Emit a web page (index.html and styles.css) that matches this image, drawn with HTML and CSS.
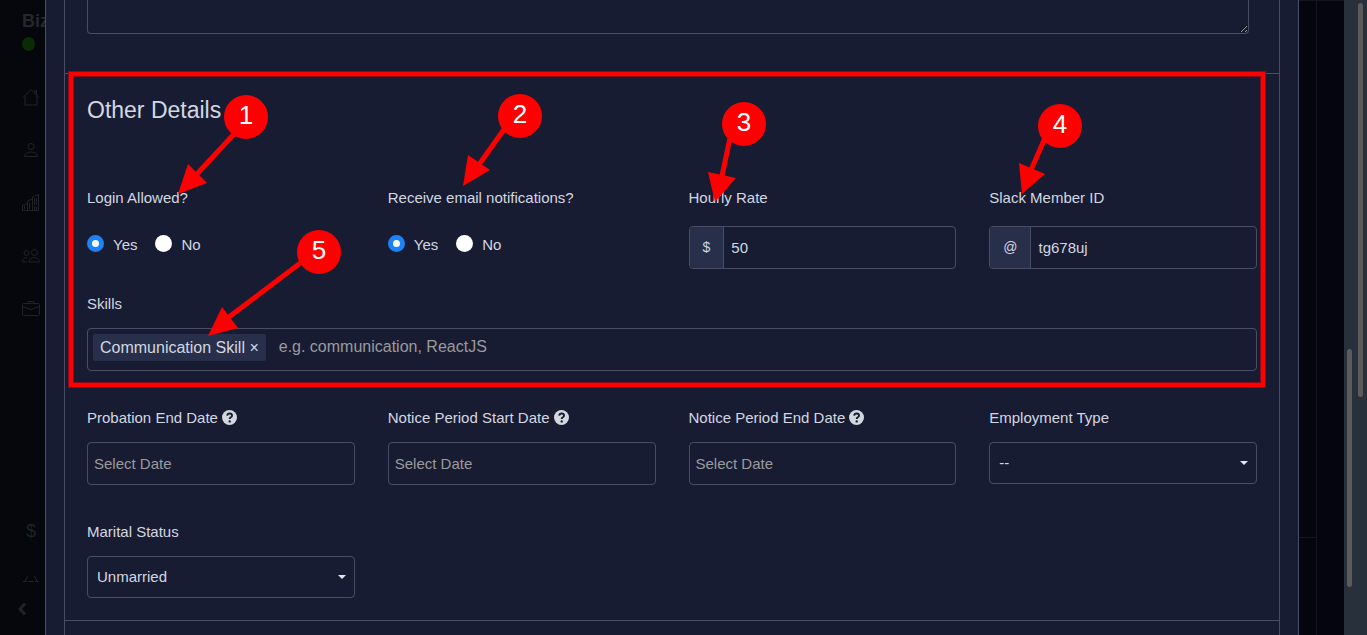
FILE: index.html
```html
<!DOCTYPE html>
<html lang="en">
<head>
<meta charset="UTF-8">
<meta name="viewport" content="width=device-width, initial-scale=1">
<title>Employee - Other Details</title>
<link rel="stylesheet" href="styles.css">
</head>
<body>

<div class="page">
  <aside class="sidebar">
    <div class="brand">Biz</div>
    <div class="status"></div>
    <nav class="menu">
      <a href="#" aria-label="Dashboard"><svg viewBox="0 0 18 18"><path d="M1 9.500 9 1.500l8 8M3 8v9h12V8M13 5V2.500h1.500V7"/></svg></a>
      <a href="#" aria-label="Leads"><svg viewBox="0 0 18 18"><circle cx="9" cy="5.500" r="3"/><path d="M2.500 15.500c0-6 13-6 13 0z"/></svg></a>
      <a href="#" aria-label="HR"><svg viewBox="0 0 18 18"><path d="M.5 16.500v-5l5-2V7l5-2V3l6-2.500v16zM5.500 9.500v7M10.500 5v11.500M12.500 16v-3h2v3M2.500 12v3M7.500 9v6M12.500 4v7M14.500 4v7"/></svg></a>
      <a href="#" aria-label="Clients"><svg viewBox="0 0 18 18"><circle cx="4.500" cy="6" r="2.500"/><circle cx="12.500" cy="5.500" r="3"/><path d="M5 10.500c-3 0-4.500 2-4.500 4.500H5M7 15c0-6 10.500-6 10.500 0z"/></svg></a>
      <a href="#" aria-label="Work"><svg viewBox="0 0 18 18"><rect x=".5" y="3.500" width="17" height="12" rx="1"/><path d="M6 3.500v-2h6v2M.5 6.500l8.500 3 8.500-3"/></svg></a>
    </nav>
    <nav class="menu-bottom">
      <a href="#" class="dollar">$</a>
      <a href="#" aria-label="Assets"><svg viewBox="0 0 18 8"><path d="M1 7.500h4M6 7.500h6M13 7.500h4M3 7l2.500-5M15 7l-2.500-5"/></svg></a>
      <button class="collapse" aria-label="Collapse menu"><svg viewBox="0 0 8 14"><path d="M7 1.500 2 7l5 5.500"/></svg></button>
    </nav>
  </aside>

  <main class="modal">
    <section class="card card-top">
      <textarea class="address" aria-label="About"></textarea>
    </section>

    <form class="card details">
      <div class="highlight"></div>
      <h2>Other Details</h2>

      <div class="grid">
        <div class="field tall" role="group" aria-labelledby="loginLabel">
          <span class="label" id="loginLabel">Login Allowed?</span>
          <div class="radios">
            <label><input type="radio" name="login" checked>Yes</label>
            <label><input type="radio" name="login">No</label>
          </div>
          <svg class="arrow">
            <path class="line" d="M148-55 110-14"/>
            <path d="M91 6l10-30 19 19z"/>
            <circle cx="159" cy="-71" r="22"/>
            <text x="159" y="-64">1</text>
          </svg>
        </div>

        <div class="field tall" role="group" aria-labelledby="emailLabel">
          <span class="label" id="emailLabel">Receive email notifications?</span>
          <div class="radios">
            <label><input type="radio" name="email" checked>Yes</label>
            <label><input type="radio" name="email">No</label>
          </div>
          <svg class="arrow">
            <path class="line" d="M117-60 90-22"/>
            <path d="M75-2l5-31 22 15z"/>
            <circle cx="132" cy="-72" r="22"/>
            <text x="132" y="-65">2</text>
          </svg>
        </div>

        <div class="field tall">
          <label class="label" for="rate">Hourly Rate</label>
          <div class="input-group">
            <span class="addon">$</span>
            <input type="text" id="rate" value="50">
          </div>
          <svg class="arrow">
            <path class="line" d="M41-50 33-12"/>
            <path d="M26 14 19-16l28 6z"/>
            <circle cx="55" cy="-64" r="22"/>
            <text x="55" y="-57">3</text>
          </svg>
        </div>

        <div class="field tall">
          <label class="label" for="slack">Slack Member ID</label>
          <div class="input-group">
            <span class="addon">@</span>
            <input type="text" id="slack" value="tg678uj">
          </div>
          <svg class="arrow">
            <path class="line" d="M56-50 42-18"/>
            <path d="M33 6 30-25l26 11z"/>
            <circle cx="71" cy="-62" r="22"/>
            <text x="71" y="-55">4</text>
          </svg>
        </div>

        <div class="field full">
          <label class="label" for="skills">Skills</label>
          <div class="tags">
            <span class="tag">Communication Skill <button type="button" aria-label="Remove">×</button></span>
            <input type="text" id="skills" placeholder="e.g. communication, ReactJS">
          </div>
          <svg class="arrow">
            <path class="line" d="M216-33 138 26"/>
            <path d="M121 42l14-29 16 21z"/>
            <circle cx="232" cy="-42" r="22"/>
            <text x="232" y="-35">5</text>
          </svg>
        </div>

        <div class="field">
          <label class="label" for="probation">Probation End Date <svg class="help" viewBox="0 0 16 16"><circle cx="8" cy="8" r="8"/><path d="M5.500 6c.4-3.200 5.200-3 5.200 0 0 1.900-2.500 1.700-2.500 3.500"/><rect x="7" y="11" width="2.400" height="2.400" rx="1"/></svg></label>
          <input class="control" type="text" id="probation" placeholder="Select Date">
        </div>

        <div class="field">
          <label class="label" for="noticeStart">Notice Period Start Date <svg class="help" viewBox="0 0 16 16"><circle cx="8" cy="8" r="8"/><path d="M5.500 6c.4-3.200 5.200-3 5.200 0 0 1.900-2.500 1.700-2.500 3.500"/><rect x="7" y="11" width="2.400" height="2.400" rx="1"/></svg></label>
          <input class="control" type="text" id="noticeStart" placeholder="Select Date">
        </div>

        <div class="field">
          <label class="label" for="noticeEnd">Notice Period End Date <svg class="help" viewBox="0 0 16 16"><circle cx="8" cy="8" r="8"/><path d="M5.500 6c.4-3.200 5.200-3 5.200 0 0 1.900-2.500 1.700-2.500 3.500"/><rect x="7" y="11" width="2.400" height="2.400" rx="1"/></svg></label>
          <input class="control" type="text" id="noticeEnd" placeholder="Select Date">
        </div>

        <div class="field">
          <label class="label" for="employment">Employment Type</label>
          <div class="select">
            <select id="employment"><option>--</option><option>Full Time</option><option>Part Time</option></select>
          </div>
        </div>

        <div class="field">
          <label class="label" for="marital">Marital Status</label>
          <div class="select">
            <select id="marital"><option>Unmarried</option><option>Married</option></select>
          </div>
        </div>
      </div>
    </form>

    <section class="card card-next"></section>
  </main>

  <div class="backdrop"><div class="backdrop-panel"></div></div>

  <div class="scrollbars">
    <div class="thumb thumb-inner"></div>
    <div class="thumb thumb-outer"></div>
  </div>
</div>

</body>
</html>
```

FILE: styles.css
```css
* {
  box-sizing: border-box;
}
body {
  margin: 0;
  background: #04050e;
  color: #d3d7e0;
  font-family: "Liberation Sans", Arial, sans-serif;
  font-size: 15px;
  line-height: 20px;
  overflow: hidden;
}
.page {
  display: flex;
  min-height: 100vh;
}
input, select, textarea, button {
  font: inherit;
  color: inherit;
}

/* dimmed sidebar behind the modal */
.sidebar {
  display: flex;
  flex-direction: column;
  width: 45px;
  padding: 11px 0 19px 22px;
  background: #05070c;
  color: #25272b;
  overflow: hidden;
}
.brand {
  font-size: 18px;
  font-weight: bold;
}
.status {
  width: 13px;
  height: 14px;
  margin-top: 6px;
  border-radius: 50%;
  background: #0a2c04;
}
.menu {
  display: flex;
  flex-direction: column;
  gap: 35px;
  margin-top: 37px;
}
.sidebar a {
  display: block;
  width: 18px;
  color: #202226;
  text-decoration: none;
}
.sidebar svg {
  display: block;
  width: 100%;
  fill: none;
  stroke: #202226;
}
.menu-bottom {
  margin-top: auto;
}
.sidebar .dollar {
  margin-bottom: 33px;
  font-size: 18px;
  text-align: center;
}
.collapse {
  display: block;
  width: 8px;
  margin: 20px 0 0 -4px;
  padding: 0;
  border: 0;
  background: none;
}
.sidebar .collapse svg {
  stroke-width: 3;
}

/* modal */
.modal {
  display: flex;
  flex-direction: column;
  flex: 1;
  min-width: 0;
  padding: 0 18px;
  background: #181c33;
  border: solid #4a4c66;
  border-width: 0 1px;
}
.card {
  border: solid #4a4c66;
  border-width: 0 1px 1px;
}
.card-top {
  padding: 0 30px 39px 22px;
}
.address {
  display: block;
  width: 100%;
  height: 34px;
  border: 1px solid #4a4c66;
  border-top: 0;
  border-radius: 0 0 4px 4px;
  background: none;
}
.details {
  position: relative;
  padding: 20px 22px 22px;
}
.card-next {
  flex: 1;
  border-bottom: 0;
}
h2 {
  margin: 0 0 62px;
  font-size: 23px;
  font-weight: normal;
  line-height: 32px;
}
.grid {
  display: grid;
  grid-template-columns: repeat(4, 1fr);
  column-gap: 33px;
}
.field {
  position: relative;
  height: 114px;
}
.field.tall {
  height: 106px;
}
.field.full {
  grid-column: 1 / -1;
}
.field:last-child {
  height: auto;
}
.label {
  display: block;
  margin-bottom: 14px;
}
.tall .label {
  margin-bottom: 18px;
}
.help {
  width: 15px;
  height: 15px;
  vertical-align: -2px;
  fill: #d3d7e0;
}
.help path {
  fill: none;
  stroke: #181c33;
  stroke-width: 2;
}
.help rect {
  fill: #181c33;
}
.radios {
  display: flex;
  gap: 18px;
  padding-top: 9px;
}
.radios label {
  display: flex;
  gap: 9px;
}
.radios input {
  appearance: none;
  width: 17px;
  height: 17px;
  margin: 0;
  border-radius: 50%;
  background: #fff;
}
.radios input:checked {
  border: 5px solid #1d82f5;
}
.control, .input-group, .tags, select {
  width: 100%;
  height: 43px;
  border: 1px solid #4a4c66;
  border-radius: 4px;
  background: none;
}
.control {
  padding: 0 6px;
}
::placeholder {
  color: #9b9b9b;
  opacity: 1;
}
.input-group {
  display: flex;
  overflow: hidden;
}
.addon {
  padding: 0 13px;
  border-right: 1px solid #4a4c66;
  background: #272f4a;
  font-size: 14px;
  line-height: 41px;
}
.input-group input, .tags input {
  flex: 1;
  min-width: 0;
  padding: 0 7px;
  border: 0;
  background: none;
}
.tags {
  display: flex;
  align-items: flex-start;
  gap: 6px;
  padding: 5px;
  font-size: 16px;
}
.tags input {
  height: 26px;
}
.tag {
  padding: 0 7px;
  border-radius: 2px;
  background: #272f4a;
  line-height: 27px;
}
.tag button {
  padding: 0;
  border: 0;
  background: none;
}
.select {
  position: relative;
}
.select::after {
  content: "";
  position: absolute;
  top: 19px;
  right: 9px;
  border: 4px solid transparent;
  border-top-color: #e3e6ee;
  border-bottom: 0;
  pointer-events: none;
}
select {
  display: block;
  height: 42px;
  padding: 0 9px;
  appearance: none;
}

/* tutorial marks */
.highlight {
  position: absolute;
  top: -2px;
  left: 4px;
  right: 14px;
  height: 315px;
  border: 4px solid #f00;
  outline: 1px solid #8c0b1a;
  box-shadow: inset 0 0 0 1px #8c0b1a;
  pointer-events: none;
}
.arrow {
  position: absolute;
  top: 0;
  left: 0;
  width: 1px;
  height: 1px;
  overflow: visible;
  fill: #f00;
  z-index: 1;
  pointer-events: none;
}
.arrow .line {
  stroke: #f00;
  stroke-width: 5;
}
.arrow text {
  fill: #fff;
  font-size: 26px;
  text-anchor: middle;
}

/* right side */
.backdrop {
  width: 45px;
  border-top: 1px solid #15161c;
  background: linear-gradient(#15161c, #15161c) 17px 0 / 1px 100% no-repeat;
}
.backdrop-panel {
  width: 18px;
  height: 537px;
  border-bottom: 1px solid #15161c;
}
.scrollbars {
  display: flex;
  justify-content: space-between;
  width: 23px;
  padding: 3px 4px 0 3px;
  background: #28303b;
}
.thumb {
  width: 5px;
  border-radius: 3px;
  background: #5b5b5b;
}
.thumb-inner {
  height: 238px;
  margin-top: 346px;
}
.thumb-outer {
  height: 394px;
}
```
